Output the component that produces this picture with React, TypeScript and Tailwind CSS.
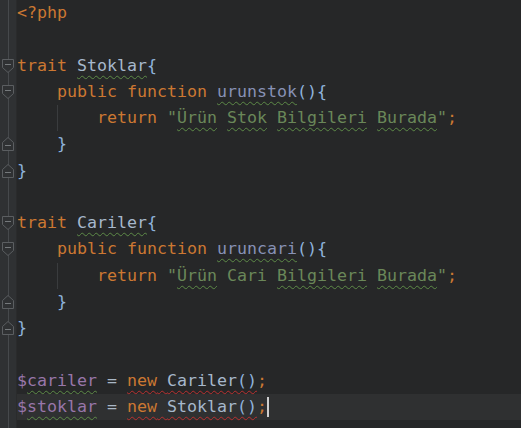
import React from "react";

type Tok = { t: string; c: string; u?: "g" | "r" };
type Line = { toks: Tok[]; fold?: "down" | "up"; guide?: boolean; current?: boolean };

const KW = "text-[#cc7832]";
const CLS = "text-[#a6b8cc]";
const BR = "text-[#8fb3dc]";
const FN = "text-[#8791b5]";
const STR = "text-[#6a8759]";
const VAR = "text-[#9876aa]";
const OP = "text-[#a9b7c6]";

const lines: Line[] = [
  { toks: [{ t: "<?php", c: KW }] },
  { toks: [] },
  {
    fold: "down",
    toks: [
      { t: "trait ", c: KW },
      { t: "Stoklar", c: CLS, u: "g" },
      { t: "{", c: BR },
    ],
  },
  {
    fold: "down",
    toks: [
      { t: "    ", c: OP },
      { t: "public function ", c: KW },
      { t: "urunstok", c: FN, u: "g" },
      { t: "(){", c: BR },
    ],
  },
  {
    guide: true,
    toks: [
      { t: "return ", c: KW },
      { t: '"', c: STR },
      { t: "Ürün", c: STR, u: "g" },
      { t: " ", c: STR },
      { t: "Stok", c: STR, u: "g" },
      { t: " ", c: STR },
      { t: "Bilgileri", c: STR, u: "g" },
      { t: " ", c: STR },
      { t: "Burada", c: STR, u: "g" },
      { t: '"', c: STR },
      { t: ";", c: KW },
    ],
  },
  { fold: "up", toks: [{ t: "    ", c: OP }, { t: "}", c: BR }] },
  { fold: "up", toks: [{ t: "}", c: BR }] },
  { toks: [] },
  {
    fold: "down",
    toks: [
      { t: "trait ", c: KW },
      { t: "Cariler", c: CLS, u: "g" },
      { t: "{", c: BR },
    ],
  },
  {
    fold: "down",
    toks: [
      { t: "    ", c: OP },
      { t: "public function ", c: KW },
      { t: "uruncari", c: FN, u: "g" },
      { t: "(){", c: BR },
    ],
  },
  {
    guide: true,
    toks: [
      { t: "return ", c: KW },
      { t: '"', c: STR },
      { t: "Ürün", c: STR, u: "g" },
      { t: " Cari ", c: STR },
      { t: "Bilgileri", c: STR, u: "g" },
      { t: " ", c: STR },
      { t: "Burada", c: STR, u: "g" },
      { t: '"', c: STR },
      { t: ";", c: KW },
    ],
  },
  { fold: "up", toks: [{ t: "    ", c: OP }, { t: "}", c: BR }] },
  { fold: "up", toks: [{ t: "}", c: BR }] },
  { toks: [] },
  {
    toks: [
      { t: "$", c: VAR },
      { t: "cariler", c: VAR, u: "g" },
      { t: " = ", c: OP },
      { t: "new Cariler()", c: "mix", u: "r" },
      { t: ";", c: KW },
    ],
  },
  {
    current: true,
    toks: [
      { t: "$", c: VAR },
      { t: "stoklar", c: VAR, u: "g" },
      { t: " = ", c: OP },
      { t: "new Stoklar()", c: "mix", u: "r" },
      { t: ";", c: KW },
    ],
  },
];

function FoldMark({ dir }: { dir: "down" | "up" }) {
  const pts = dir === "down" ? "0.5,0.5 11.5,0.5 11.5,8.5 6,13.5 0.5,8.5" : "0.5,13.5 11.5,13.5 11.5,5.5 6,0.5 0.5,5.5";
  const y = dir === "down" ? 5.5 : 8.5;
  return (
    <svg width="12" height="14" viewBox="0 0 12 14" className="block">
      <polygon points={pts} fill="#2f3133" stroke="#5b5e61" strokeWidth="1" />
      <line x1="3" y1={y} x2="9" y2={y} stroke="#75797c" strokeWidth="1" />
    </svg>
  );
}

function Token({ tok }: { tok: Tok }) {
  const deco =
    tok.u === "g"
      ? "underline decoration-wavy decoration-[#5d8a47] decoration-1 underline-offset-[4px]"
      : tok.u === "r"
      ? "underline decoration-wavy decoration-[#b8302f] decoration-1 underline-offset-[4px]"
      : "";
  if (tok.c === "mix") {
    const [kw, ...rest] = tok.t.split(" ");
    const name = rest.join(" ").replace("()", "");
    return (
      <span className={deco}>
        <span className={KW}>{kw} </span>
        <span className={CLS}>{name}</span>
        <span className={BR}>()</span>
      </span>
    );
  }
  return <span className={`${tok.c} ${deco}`}>{tok.t}</span>;
}

export default function App() {
  return (
    <div
      className="w-[521px] h-[428px] overflow-hidden bg-[#262728] flex"
      style={{ fontFamily: '"DejaVu Sans Mono", monospace' }}
    >
      <div className="relative w-[16px] shrink-0 bg-[#2f3133]">
        <div className="absolute left-[8px] top-0 bottom-0 w-px bg-[#46494c]" />
        {lines.map((l, i) => (
          <div key={i} className="relative h-[26.25px] flex items-center pl-[2px]">
            {l.fold && <FoldMark dir={l.fold} />}
          </div>
        ))}
      </div>
      <div className="flex-1 min-w-0 border-l border-[#2a2b2c]">
        {lines.map((l, i) => (
          <div
            key={i}
            className={`h-[26.25px] leading-[26.25px] text-[16.61px] whitespace-pre ${
              l.current ? "bg-[#2f3031]" : ""
            }`}
          >
            {l.guide && (
              <>
                <span className="inline-block w-[40px] h-[26.25px] align-top" />
                <span className="inline-block w-[40px] h-[26.25px] align-top border-l border-[#3a3c3e]" />
              </>
            )}
            {l.toks.map((tok, j) => (
              <Token key={j} tok={tok} />
            ))}
            {l.current && (
              <span className="inline-block w-[2px] h-[20px] bg-[#cfcfcf] align-middle" />
            )}
          </div>
        ))}
      </div>
    </div>
  );
}
